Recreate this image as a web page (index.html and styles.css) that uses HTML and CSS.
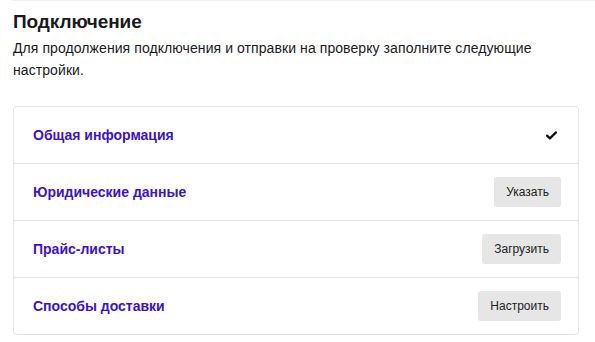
FILE: index.html
```html
<!DOCTYPE html>
<html lang="ru">
<head>
  <meta charset="UTF-8" />
  <meta name="viewport" content="width=device-width, initial-scale=1.0"/>
  <title>Подключение</title>
  <link rel="stylesheet" href="styles.css">
</head>
<body>
  <div class="topline"></div>

  <div class="page">
    <h1>Подключение</h1>
    <p class="intro">Для продолжения подключения и отправки на проверку заполните следующие настройки.</p>

    <div class="card">
      <div class="row">
        <span class="row-title">Общая информация</span>
        <svg class="check" width="11" height="9" viewBox="0 0 11 9">
          <path d="M1 4.6 L3.9 7.4 L10 1.4" fill="none" stroke="#111" stroke-width="2.2" stroke-linecap="round" stroke-linejoin="round"/>
        </svg>
      </div>
      <div class="row">
        <span class="row-title">Юридические данные</span>
        <button class="btn">Указать</button>
      </div>
      <div class="row">
        <span class="row-title">Прайс-листы</span>
        <button class="btn">Загрузить</button>
      </div>
      <div class="row">
        <span class="row-title">Способы доставки</span>
        <button class="btn">Настроить</button>
      </div>
    </div>
  </div>
</body>
</html>
```

FILE: styles.css
```css
body {
  margin: 0;
  font-family: 'Liberation Sans', Arial, sans-serif;
  color: #1a1a1a;
  background: #fff;
}
.topline {
  height: 1px;
  margin-left: 12px;
  background: #f0f0f0;
}
.page {
  padding: 0 16px 0 13px;
}
h1 {
  font-size: 19px;
  font-weight: bold;
  margin: 9px 0 0;
  line-height: 24px;
  letter-spacing: -0.1px;
}
.intro {
  font-size: 14px;
  line-height: 22px;
  margin: 3px 0 0;
  padding-right: 40px;
  letter-spacing: 0.08px;
}
.card {
  margin-top: 25px;
  border: 1px solid #e3e3e3;
  border-radius: 4px;
}
.row {
  display: flex;
  align-items: center;
  justify-content: space-between;
  height: 56px;
  padding: 0 17px 0 19px;
  border-top: 1px solid #e3e3e3;
}
.row:first-child {
  border-top: none;
}
.row-title {
  font-size: 14px;
  font-weight: bold;
  color: #3d12cf;
}
.check {
  margin-right: 4px;
}
.btn {
  font-family: 'Liberation Sans', Arial, sans-serif;
  font-size: 12px;
  color: #222;
  background: #e6e6e6;
  border: none;
  border-radius: 3px;
  height: 30px;
  padding: 0 12px;
}
```
